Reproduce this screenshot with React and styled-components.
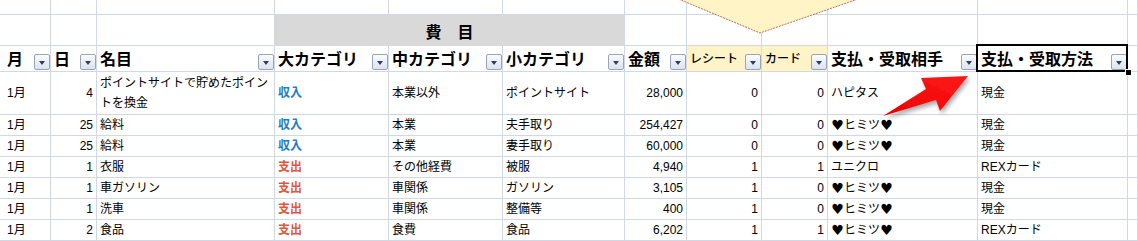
import React from "react";
import styled, { createGlobalStyle, css } from "styled-components";

const GRID = "#d0d7e5";

const GlobalStyle = createGlobalStyle`
  html, body { margin: 0; padding: 0; background: #fff; }
  body {
    font-family: "Liberation Sans", "Noto Sans CJK JP", "DejaVu Sans", sans-serif;
    color: #000;
  }
`;

const Sheet = styled.div`
  position: relative;
  width: 1138px;
  height: 241px;
  overflow: hidden;
  background: #fff;
`;

const Grid = styled.div`
  display: grid;
  grid-template-columns: 51px 46px 178px 114px 114px 122px 62px 75px 66px 150px 150px 1fr;
  grid-template-rows: 15px 31px 26px 43px repeat(6, 21px);
`;

const Cell = styled.div`
  box-sizing: border-box;
  border-right: 1px solid ${GRID};
  border-bottom: 1px solid ${GRID};
  display: flex;
  align-items: center;
  justify-content: ${(p) => (p.$align === "right" ? "flex-end" : "flex-start")};
  text-align: ${(p) => p.$align || "left"};
  padding: 0 3px;
  padding-left: ${(p) => (p.$first ? "7px" : "3px")};
  font-size: 12px;
  line-height: 20px;
  font-weight: ${(p) => (p.$bold ? 700 : 400)};
  color: ${(p) => p.$color || "#000"};
  white-space: normal;
  word-break: break-all;
  overflow: hidden;
`;

const Heart = styled.span`
  font-family: "DejaVu Sans", sans-serif;
  font-size: 14px;
  line-height: 1;
  display: inline-block;
  width: 13px;
  text-align: center;
`;

const BlankCell = styled.div`
  box-sizing: border-box;
  border-right: 1px solid ${GRID};
  border-bottom: 1px solid ${GRID};
`;

const TitleBand = styled.div`
  grid-column: span 3;
  box-sizing: border-box;
  background: #d9d9d9;
  border-right: 1px solid ${GRID};
  border-bottom: 1px solid #d9d9d9;
  display: flex;
  align-items: center;
  justify-content: center;
  font-family: "Noto Sans CJK JP", sans-serif;
  font-size: 16px;
  font-weight: 700;
  padding-top: 2px;
`;

const HeaderCell = styled.div`
  position: relative;
  box-sizing: border-box;
  border-right: 1px solid ${GRID};
  border-bottom: 1px solid ${GRID};
  background: ${(p) => (p.$tint ? "#fff4c8" : "#fff")};
  display: flex;
  align-items: center;
  justify-content: space-between;
  padding-left: ${(p) => (p.$first ? "7px" : "3px")};
  font-family: "Noto Sans CJK JP", sans-serif;
  font-size: ${(p) => (p.$small ? "12px" : "16px")};
  font-weight: ${(p) => (p.$small ? 500 : 700)};
  white-space: nowrap;
  ${(p) =>
    p.$selected &&
    css`
      &::after {
        content: "";
        position: absolute;
        top: -2px;
        left: -2px;
        right: -1px;
        bottom: -1px;
        border: 2px solid #000;
        pointer-events: none;
      }
      &::before {
        content: "";
        position: absolute;
        right: -4px;
        bottom: -4px;
        width: 5px;
        height: 5px;
        background: #000;
        outline: 1px solid #fff;
        z-index: 2;
      }
    `}
`;

const HeaderLabel = styled.span`
  margin-top: -2px;
`;

const FilterButton = styled.span`
  align-self: flex-end;
  margin-bottom: 1px;
  flex: none;
  box-sizing: border-box;
  width: 16px;
  height: 16px;
  border: 1px solid #97a3bf;
  border-radius: 2px;
  background: linear-gradient(#fbfcfe, #dde2ec);
  display: flex;
  align-items: center;
  justify-content: center;
  &::after {
    content: "";
    margin-top: 2px;
    width: 0;
    height: 0;
    border-left: 3.5px solid transparent;
    border-right: 3.5px solid transparent;
    border-top: 4px solid #2d3b6e;
  }
`;

const Overlay = styled.svg`
  position: absolute;
  left: 0;
  top: 0;
  pointer-events: none;
`;

const headers = [
  { t: "月", first: true },
  { t: "日" },
  { t: "名目" },
  { t: "大カテゴリ" },
  { t: "中カテゴリ" },
  { t: "小カテゴリ" },
  { t: "金額" },
  { t: "レシート", small: true, tint: true },
  { t: "カード", small: true, tint: true },
  { t: "支払・受取相手" },
  { t: "支払・受取方法", selected: true },
];

const rows = [
  ["1月", "4", "ポイントサイトで貯めたポイントを換金", "収入", "本業以外", "ポイントサイト", "28,000", "0", "0", "ハピタス", "現金"],
  ["1月", "25", "給料", "収入", "本業", "夫手取り", "254,427", "0", "0", "♥ヒミツ♥", "現金"],
  ["1月", "25", "給料", "収入", "本業", "妻手取り", "60,000", "0", "0", "♥ヒミツ♥", "現金"],
  ["1月", "1", "衣服", "支出", "その他経費", "被服", "4,940", "1", "1", "ユニクロ", "REXカード"],
  ["1月", "1", "車ガソリン", "支出", "車関係", "ガソリン", "3,105", "1", "0", "♥ヒミツ♥", "現金"],
  ["1月", "1", "洗車", "支出", "車関係", "整備等", "400", "1", "0", "♥ヒミツ♥", "現金"],
  ["1月", "2", "食品", "支出", "食費", "食品", "6,202", "1", "1", "♥ヒミツ♥", "REXカード"],
];

const rightCols = new Set([1, 6, 7, 8]);

function renderText(v) {
  if (!v.includes("♥")) return v;
  return v.split(/(♥)/).map((part, i) =>
    part === "♥" ? <Heart key={i}>♥</Heart> : <span key={i}>{part}</span>
  );
}

export default function App() {
  return (
    <>
      <GlobalStyle />
      <Sheet>
        <Grid>
          {Array.from({ length: 12 }).map((_, i) => (
            <BlankCell key={"r1" + i} />
          ))}
          <BlankCell />
          <BlankCell />
          <BlankCell />
          <TitleBand>費　目</TitleBand>
          {Array.from({ length: 6 }).map((_, i) => (
            <BlankCell key={"r2" + i} />
          ))}
          {headers.map((h, i) => (
            <HeaderCell
              key={"h" + i}
              $first={h.first}
              $small={h.small}
              $tint={h.tint}
              $selected={h.selected}
            >
              <HeaderLabel>{h.t}</HeaderLabel>
              <FilterButton />
            </HeaderCell>
          ))}
          <BlankCell />
          {rows.map((r, ri) => (
            <React.Fragment key={"d" + ri}>
              {r.map((v, ci) => {
                const isKind = ci === 3;
                const color = isKind ? (v === "収入" ? "#1f7cc6" : "#e0583c") : undefined;
                return (
                  <Cell
                    key={ci}
                    $first={ci === 0}
                    $align={rightCols.has(ci) ? "right" : "left"}
                    $bold={isKind}
                    $color={color}
                  >
                    {renderText(v)}
                  </Cell>
                );
              })}
              <BlankCell />
            </React.Fragment>
          ))}
        </Grid>
        <Overlay width="1138" height="241" viewBox="0 0 1138 241">
          <defs>
            <filter id="shadow" x="-20%" y="-20%" width="150%" height="150%">
              <feDropShadow dx="2" dy="3" stdDeviation="2" floodColor="#000" floodOpacity="0.35" />
            </filter>
            <linearGradient id="red" x1="0" y1="1" x2="1" y2="0">
              <stop offset="0" stopColor="#e80000" />
              <stop offset="1" stopColor="#ff1a1a" />
            </linearGradient>
          </defs>
          <polygon
            points="676,-2 760,33 861,-2"
            fill="#fff4c6"
            stroke="#b4715a"
            strokeWidth="1"
            strokeDasharray="2 1"
          />
          <polygon
            points="883,116 926,89 921,78 968,76 940,111 936,100"
            fill="url(#red)"
            filter="url(#shadow)"
          />
        </Overlay>
      </Sheet>
    </>
  );
}
